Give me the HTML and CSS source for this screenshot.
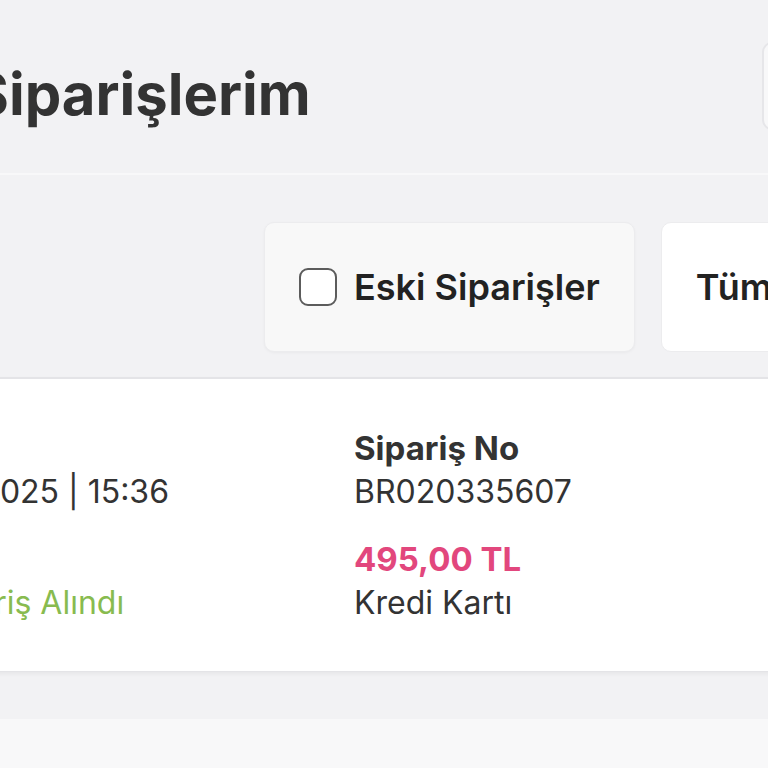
FILE: index.html
```html
<!DOCTYPE html>
<html lang="tr">
<head>
    <meta charset="UTF-8">
    <meta name="viewport" content="width=device-width, initial-scale=1">
    <title>Siparişlerim</title>
    <link rel="stylesheet" href="styles.css">
</head>
<body>

    <div class="page">

        <!-- Header -->
        <header class="head">
            <h1 class="title">Siparişlerim</h1>
            <button class="head-btn">Filtre</button>
        </header>

        <!-- Filters -->
        <div class="filters">
            <label class="chip chip-old">
                <span class="check"></span>
                Eski Siparişler
            </label>
            <div class="chip chip-all">Tüm Siparişler</div>
        </div>

        <!-- Order Card -->
        <div class="order">
            <div class="col col-left">
                <p class="label">Tarih</p>
                <p class="value">04.06.2025 | 15:36</p>
                <p class="label gap">Durum</p>
                <p class="value status">Sipariş Alındı</p>
            </div>
            <div class="col col-right">
                <p class="label">Sipariş No</p>
                <p class="value">BR020335607</p>
                <p class="price gap">495,00 TL</p>
                <p class="value">Kredi Kartı</p>
            </div>
        </div>

        <div class="next"></div>
    </div>

</body>
</html>
```

FILE: styles.css
```css
/* General Styles */
body {
    margin: 0;
    background: #f2f2f4;
    font-family: Inter, "Noto Sans", sans-serif;
    color: #333;
    overflow: hidden;
    height: 768px;
}

.page {
    margin-left: -36px;
    width: 960px;
}

p {
    margin: 0;
}

/* Header */
.head {
    box-sizing: border-box;
    height: 175px;
    padding: 59px 0 0 7px;
    display: flex;
    justify-content: space-between;
    align-items: flex-start;
    border-bottom: 2px solid #f8f8f9;
}

.title {
    margin: 0;
    font-size: 58px;
    line-height: 70px;
    font-weight: 700;
    color: #333;
}

.head-btn {
    margin-top: -17px;
    margin-right: 22px;
    width: 140px;
    height: 88px;
    padding-left: 30px;
    background: #f8f8f9;
    border: 2px solid #e6e6e9;
    border-radius: 10px;
    font-family: Inter, sans-serif;
    font-size: 28px;
    color: #333;
    text-align: left;
}

/* Filters */
.filters {
    display: flex;
    gap: 26px;
    padding: 47px 0 25px 300px;
}

.chip {
    box-sizing: border-box;
    height: 130px;
    display: flex;
    align-items: center;
    gap: 17px;
    padding: 0 34px;
    border-radius: 10px;
    font-size: 36px;
    font-weight: 600;
    color: #222;
    white-space: nowrap;
}

.chip-old {
    background: #f8f8f8;
    border: 1px solid #ececee;
    box-shadow: 0 1px 3px rgba(0, 0, 0, 0.04);
}

.chip-all {
    background: #fff;
    border: 1px solid #ececee;
}

.check {
    box-sizing: border-box;
    width: 38px;
    height: 38px;
    border: 2.5px solid #5c5c5c;
    border-radius: 9px;
    background: #fff;
}

/* Order Card */
.order {
    display: grid;
    grid-template-columns: 390px 1fr;
    padding: 47px 0 46px 0;
    background: #fff;
    border-top: 2px solid #e4e4e7;
    border-bottom: 1px solid #e4e4e7;
    box-shadow: 0 2px 4px rgba(0, 0, 0, 0.05);
}

.col-left {
    margin-left: -80px;
    white-space: nowrap;
}

.label {
    font-size: 33px;
    line-height: 44px;
    font-weight: 700;
    color: #333;
}

.value {
    font-size: 32px;
    line-height: 44px;
    color: #333;
}

.gap {
    margin-top: 23px;
}

.price {
    font-size: 33px;
    line-height: 44px;
    font-weight: 700;
    color: #e2477d;
}

.status {
    margin-left: 44px;
    color: #88bb4f;
}

.next {
    margin-top: 47px;
    height: 60px;
    background: #f8f8f9;
}
```
